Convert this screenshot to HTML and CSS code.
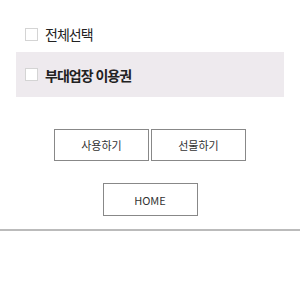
FILE: index.html
```html
<!DOCTYPE html>
<html lang="ko">
<head>
  <meta charset="UTF-8">
  <meta name="viewport" content="width=device-width, initial-scale=1.0">
  <title>이용권</title>
  <link rel="stylesheet" href="styles.css">
</head>
<body>

  <!-- 선택 목록 -->
  <div class="list">
    <label class="row-all">
      <span class="check"></span>
      <span class="row-label">전체선택</span>
    </label>
    <label class="row-item">
      <span class="check"></span>
      <span class="row-label bold">부대업장 이용권</span>
    </label>
  </div>

  <!-- 버튼 -->
  <div class="actions">
    <button class="btn">사용하기</button>
    <button class="btn">선물하기</button>
  </div>
  <div class="home-wrap">
    <button class="btn home">HOME</button>
  </div>

  <div class="divider"></div>

</body>
</html>
```

FILE: styles.css
```css
body {
  font-family: "Noto Sans CJK KR", "Noto Sans", sans-serif;
  margin: 0;
  padding: 0;
  background-color: #fff;
  color: #222;
}

.list {
  padding: 16px 16px 0 16px;
}

.row-all {
  display: flex;
  align-items: center;
  height: 36px;
  padding-left: 9px;
}

.row-item {
  display: flex;
  align-items: center;
  height: 45px;
  padding-left: 9px;
  background-color: #eeeaee;
}

.check {
  width: 11px;
  height: 11px;
  border: 1px solid #d4d4d4;
  background-color: #fff;
  margin-right: 7px;
  flex-shrink: 0;
}

.row-label {
  font-size: 14px;
  line-height: 20px;
  letter-spacing: -1px;
}

.row-label.bold {
  font-weight: 700;
}

.actions {
  display: flex;
  justify-content: center;
  gap: 2px;
  margin-top: 32px;
}

.btn {
  width: 95px;
  height: 32px;
  padding: 0;
  background-color: #fff;
  border: 1px solid #888;
  font-family: "Noto Sans CJK KR", "Noto Sans", sans-serif;
  font-size: 11px;
  color: #333;
}

.home-wrap {
  display: flex;
  justify-content: center;
  margin-top: 22px;
}

.btn.home {
  height: 33px;
}

.divider {
  margin-top: 13px;
  border-top: 2px solid #bbb;
}
```
